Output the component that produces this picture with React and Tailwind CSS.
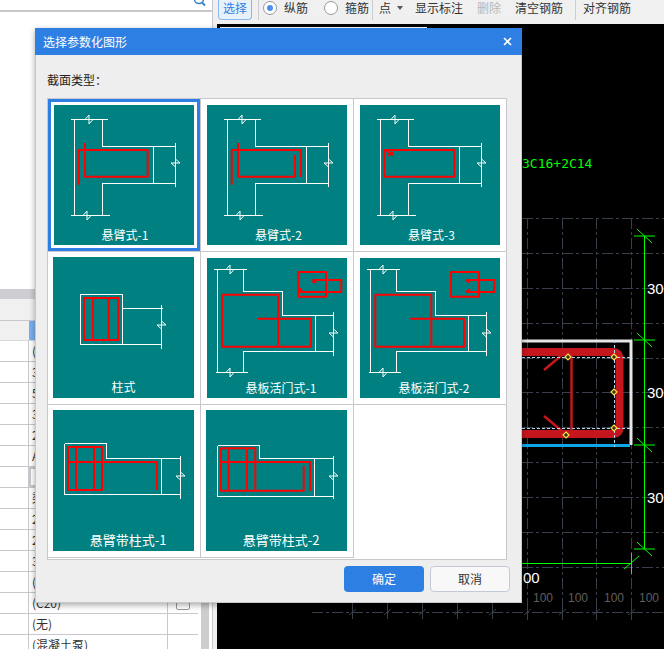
const W = '#ffffff';
const R = '#ff0000';

function Wp({ d }) {
  return <path d={d} fill="none" stroke={W} strokeWidth="1" shapeRendering="crispEdges" />;
}
function Rp({ d }) {
  return <path d={d} fill="none" stroke={R} strokeWidth="2" strokeLinejoin="round" />;
}
function BreakH({ x, y }) {
  return <path d={`M${x},${y - 4.5} V${y + 4.5} M${x - 4},${y} L${x},${y - 4.5} M${x},${y + 4.5} L${x + 4},${y}`} fill="none" stroke={W} strokeWidth="1" />;
}
function BreakV({ x, y }) {
  return <path d={`M${x - 4.5},${y} H${x + 4.5} M${x},${y - 4} L${x + 4.5},${y} M${x - 4.5},${y} L${x},${y + 4}`} fill="none" stroke={W} strokeWidth="1" />;
}

function Cantilever({ children }) {
  return (
    <>
      <Wp d="M16.5,14.5H53.5 M20.5,14.5V110.5 M48.5,14.5V41.5H121.5 M48.5,110.5V78.5H121.5 M99.5,41.5V78.5 M121.5,37.5V81.5 M16.5,110.5H55.5" />
      <BreakH x={35} y={14.5} />
      <BreakH x={33} y={110.5} />
      <BreakV x={121.5} y={58} />
      {children}
    </>
  );
}
function Slab({ children }) {
  return (
    <>
      <Wp d="M6.5,11.5H39.5 M10.5,11.5V114.5 M36.5,11.5V33.5H75.5V57.5H126.5 M36.5,114.5V93.5H126.5 M8.5,114.5H40.5 M108.5,57.5V93.5 M126.5,53.5V97.5" />
      <BreakH x={23} y={11.5} />
      <BreakH x={23} y={114.5} />
      <BreakV x={126.5} y={75} />
      {children}
    </>
  );
}
function ColWhite({ top }) {
  return (
    <>
      <Wp d={`M11.5,${top}H53.5V48.5H127.5 M11.5,${top}V${top + 51}H127.5 M108.5,48.5V${top + 51} M127.5,45.5V88.5`} />
      <BreakV x={127.5} y={66} />
    </>
  );
}

const tiles = [
  { label: '悬臂式-1', cls: 'w-[140px] h-[140px] ml-[3px] mt-[3px]', text: 'text-[12px] pl-[2px]', draw: <Cantilever><Rp d="M31,38V71.7H93.7V45H24.7V79.7" /></Cantilever> },
  { label: '悬臂式-2', cls: 'w-[140px] h-[140px] ml-[6px] mt-[6px]', text: 'text-[12px] pl-[3px]', draw: <Cantilever><Rp d="M31,38V71.7H88V50 M24.7,79.7V45H94V72" /></Cantilever> },
  { label: '悬臂式-3', cls: 'w-[140px] h-[140px] ml-[6px] mt-[6px]', text: 'text-[12px] pl-[3px]', draw: <Cantilever><Rp d="M24.5,45H94.3V71.7H24.5Z M25,45L33,50 M28,51L33,47" /></Cantilever> },
  { label: '柱式', cls: 'w-[141px] h-[141px] ml-[5px] mt-[5px]', text: 'text-[12px] pl-0', draw: (
    <>
      <Wp d="M27.5,37.5H69.5V87.5H27.5Z M69.5,51.5H110 M69.5,87.5H108.5 M108.5,48V92" />
      <BreakV x={108.5} y={68} />
      <Rp d="M31,41H65.3V83H31Z M40,41V83 M55.7,41V83" />
    </>
  ) },
  { label: '悬板活门式-1', cls: 'w-[140px] h-[140px] ml-[6px] mt-[6px]', text: 'text-[12px] pl-[8px]', draw: (
    <Slab><Rp d="M15.3,36.7H71.3V88.7H15.3Z M50.3,60.7H104V88.7H71.3 M91.3,14H119V38.7H91.3Z M106.3,25V22H134.3V34H91.3 M106,22L109,25 M92,30L95,33" /></Slab>
  ) },
  { label: '悬板活门式-2', cls: 'w-[140px] h-[140px] ml-[6px] mt-[6px]', text: 'text-[12px] pl-[8px]', draw: (
    <Slab><Rp d="M15.3,36.7H71.3V88.7H15.3Z M50.3,60.7H104V88.7H71.3 M91,14H119V38.7H91Z M106.7,22H134.3V34H106.7 M106,22L110,25 M106,34L110,31" /></Slab>
  ) },
  { label: '悬臂带柱式-1', cls: 'w-[141px] h-[141px] ml-[5px] mt-[5px]', text: 'text-[13px] pl-[9px]', draw: (
    <>
      <ColWhite top={33.5} />
      <Rp d="M15,37H49V80H15Z M15,52H104V80 M23,37V80 M41,37V80" />
    </>
  ) },
  { label: '悬臂带柱式-2', cls: 'w-[141px] h-[141px] ml-[5px] mt-[5px]', text: 'text-[13px] pl-[9px]', draw: (
    <>
      <ColWhite top={35.5} />
      <Rp d="M15,38.3H49.3V80.7H15Z M15,52H104V80.7 M49.3,80.7H97.7V56 M22.7,38.3V80.7 M41,38.3V80.7" />
    </>
  ) },
];

function Tile({ t }) {
  return (
    <div className={`${t.cls} bg-[#008080] flex flex-col overflow-hidden`}>
      <svg className="block w-full h-[119px] shrink-0">{t.draw}</svg>
      <div className={`flex-1 flex items-center justify-center text-white ${t.text}`}>{t.label}</div>
    </div>
  );
}

const rows = ['(矩形)', '300', '500', '3C16', '2C14', 'A8@100', '', '梁', '2', '2', '3', '(C30)', '(C20)', '(无)', '(混凝土泵)', ''];

function Diamond({ x, y }) {
  return <path d={`M${x},${y - 3} L${x + 3},${y} L${x},${y + 3} L${x - 3},${y} Z`} fill="#3a3010" stroke="#ffe14d" strokeWidth="1.2" />;
}
function GreenTick({ y }) {
  return <path d={`M634,${y}H655 M637,${y - 7}L652,${y + 7}`} stroke="#00ff00" strokeWidth="1" fill="none" />;
}

function Canvas() {
  const hs = [218, 253, 288, 323, 358, 392, 427, 462, 497, 532, 567];
  const vs = [527, 562, 596, 631];
  const ticks = [352, 387, 422, 457, 492, 527, 562, 596, 631];
  return (
    <svg className="block w-[447px] h-[625px] bg-black" viewBox="217 24 447 625">
      <path d="M220,27.5H427" stroke="#ffffff" strokeWidth="1" />
      {hs.map((y) => <path key={y} d={`M522,${y + 0.5}H664`} stroke="#3a3f4c" strokeDasharray="11 3 3 3" shapeRendering="crispEdges" />)}
      {vs.map((x) => <path key={x} d={`M${x + 0.5},218V620`} stroke="#3a3f4c" strokeDasharray="11 3 3 3" shapeRendering="crispEdges" />)}
      <path d="M312,612.5H664" stroke="#3a3f4c" strokeDasharray="11 3 3 3" shapeRendering="crispEdges" />
      {ticks.map((x) => <path key={x} d={`M${x + 0.5},603V619 M${x - 3},615L${x + 4},609`} stroke="#3a3f4c" fill="none" />)}
      <text x="522" y="168" fill="#00ff00" className="font-['DejaVu_Sans_Mono',monospace] text-[13px]">3C16+2C14</text>

      <path d="M522,341H631V445" stroke="#e6e6e6" strokeWidth="3" fill="none" />
      <path d="M522,445.5H630" stroke="#0ea5e9" strokeWidth="3" />
      <path d="M522,352H612Q619.5,352 619.5,360V427Q619.5,434 612,434H522" stroke="#c4161c" strokeWidth="8" fill="none" />
      <path d="M571.5,355V432" stroke="#c4161c" strokeWidth="2.5" />
      <path d="M562,355L544,370 M544,416L562,431" stroke="#c4161c" strokeWidth="2.5" />
      <path d="M522,357.5H630 M522,428.5H630 M614.5,340V447" stroke="#b8d4f0" strokeWidth="1" strokeDasharray="3 2" />
      <Diamond x={568} y={357} />
      <Diamond x={614} y={357} />
      <Diamond x={614} y={392} />
      <Diamond x={614} y={428} />
      <Diamond x={566} y={435} />

      <path d="M644.5,236V549" stroke="#00ff00" strokeWidth="1" />
      <GreenTick y={236} />
      <GreenTick y={340} />
      <GreenTick y={445} />
      <GreenTick y={549} />
      <path d="M522,563.5H631 M631.5,553V574 M624,569L639,556" stroke="#00ff00" strokeWidth="1" fill="none" />

      <text x="647" y="294" fill="#ffffff" className="font-['Liberation_Sans',sans-serif] text-[15px]">300</text>
      <text x="647" y="398" fill="#ffffff" className="font-['Liberation_Sans',sans-serif] text-[15px]">300</text>
      <text x="647" y="503" fill="#ffffff" className="font-['Liberation_Sans',sans-serif] text-[15px]">300</text>
      <text x="523" y="583" fill="#ffffff" className="font-['Liberation_Sans',sans-serif] text-[15px]">00</text>
      {[533, 568, 604, 639].map((x) => (
        <text key={x} x={x} y="602" fill="#5f5f5f" className="font-['Liberation_Sans',sans-serif] text-[12px]">100</text>
      ))}
    </svg>
  );
}

export default function App() {
  return (
    <div className="relative w-[664px] h-[649px] overflow-hidden flex bg-white font-['Noto_Sans_CJK_SC',sans-serif] text-[12px] text-[#333333]">
      {/* left panel */}
      <div className="w-[213px] h-full border-r border-[#c8c8cc] flex flex-col shrink-0 overflow-hidden">
        <div className="h-[10px] shrink-0 relative flex justify-end pr-[4px]">
          <svg className="block w-[14px] h-[10px]" viewBox="0 0 14 10">
            <circle cx="5" cy="-1" r="4.5" fill="none" stroke="#3b82c4" strokeWidth="1.5" />
            <path d="M8,2.5L11,5.5" stroke="#3b82c4" strokeWidth="2" />
          </svg>
        </div>
        <div className="h-[2px] shrink-0 bg-[#c8c8cc]" />
        <div className="h-[277px] shrink-0" />
        <div className="h-[10px] shrink-0 bg-[#cdcdd2]" />
        <div className="h-[22px] shrink-0 bg-[#f0f0f0] border-b border-[#c8c8cc]" />
        <div className="flex">
          <div className="w-[198px] shrink-0">
            <div className="h-[20px] bg-[#f0f0f0] border-b border-[#d8d8d8] flex">
              <div className="w-[29px]" />
              <div className="w-[30px] bg-[#7ab0f0]" />
            </div>
            {rows.map((r, i) => (
              <div key={i} className="h-[21px] border-b border-[#c8c8cc] flex items-center">
                <div className="w-[29px] h-full shrink-0 border-r border-[#c8c8cc]" />
                <div className={`w-[139px] h-full shrink-0 border-r border-[#c8c8cc] pl-[3px] flex items-center ${i === 6 ? 'border-2 border-[#6fa8ea]' : ''}`}>{r}</div>
                <div className="flex-1 flex items-center justify-center">
                  {i === 12 && <div className="w-[14px] h-[14px] border border-[#999999] rounded-[2px] bg-white" />}
                </div>
              </div>
            ))}
          </div>
          <div className="w-[8px] ml-[3px] bg-[#cdcdcd]" />
        </div>
      </div>

      {/* right panel */}
      <div className="flex-1 flex flex-col bg-[#f0f0f0]">
        <div className="h-[24px] shrink-0 flex items-start pl-[5px] leading-[16px]">
          <div className="w-[34px] h-[20px] border-x border-b border-[#8ab8ee] rounded-b-[4px] bg-[#e8f2fd] text-[#2e7fe3] flex items-center justify-center pb-[3px]">选择</div>
          <div className="w-px h-[20px] ml-[6px] bg-[#cccccc]" />
          <div className="w-[14px] h-[14px] ml-[4px] mt-px rounded-full border border-[#999999] bg-white flex items-center justify-center">
            <div className="w-[6px] h-[6px] rounded-full bg-[#4a90ee]" />
          </div>
          <span className="ml-[7px]">纵筋</span>
          <div className="w-[14px] h-[14px] ml-[16px] mt-px rounded-full border border-[#999999] bg-white" />
          <span className="ml-[7px]">箍筋</span>
          <div className="w-px h-[20px] ml-[3px] bg-[#cccccc]" />
          <span className="ml-[6px]">点</span>
          <svg className="block w-[6px] h-[4px] ml-[6px] mt-[6px]" viewBox="0 0 6 4"><path d="M0,0H6L3,4Z" fill="#555555" /></svg>
          <span className="ml-[12px]">显示标注</span>
          <span className="ml-[14px] text-[#b8b8b8]">删除</span>
          <span className="ml-[14px]">清空钢筋</span>
          <div className="w-px h-[20px] ml-[12px] bg-[#cccccc]" />
          <span className="ml-[7px]">对齐钢筋</span>
        </div>
        <div className="ml-[4px] flex-1 overflow-hidden">
          <Canvas />
        </div>
      </div>

      {/* dialog */}
      <div className="absolute left-[35px] top-[28px] w-[487px] h-[575px] bg-[#eeeeee] border-x border-b border-[#c8c8cc] shadow-[0_2px_6px_rgba(0,0,0,0.35)] flex flex-col">
        <div className="h-[27px] shrink-0 -mx-px bg-[#2e7fe3] flex items-center justify-between pl-[8px] pr-[10px] text-white">
          <span>选择参数化图形</span>
          <svg className="block w-[9px] h-[9px]" viewBox="0 0 9 9"><path d="M1,1L8,8 M8,1L1,8" stroke="#ffffff" strokeWidth="1.6" /></svg>
        </div>
        <div className="px-[11px] pt-[16px] flex-1 flex flex-col">
          <div className="h-[18px] leading-[18px] mb-[9px] text-[#222222]">截面类型：</div>
          <div className="w-[460px] h-[462px] bg-white border border-[#c8c8cc] grid grid-cols-[153px_153px_152px] grid-rows-[153px_153px_153px] content-start">
            <div className="border-r border-b border-[#c8c8cc]">
              <div className="w-[152px] h-[152px] border-[3px] border-[#2e7fe3] flex items-start">
                <Tile t={tiles[0]} />
              </div>
            </div>
            {tiles.slice(1).map((t, i) => (
              <div key={t.label} className={`flex items-start border-[#c8c8cc] border-b ${i === 1 || i === 4 ? '' : 'border-r'}`}>
                <Tile t={t} />
              </div>
            ))}
          </div>
          <div className="flex justify-end gap-[6px] mt-[6px]">
            <button className="w-[80px] h-[26px] rounded-[4px] bg-[#2e7fe3] text-white">确定</button>
            <button className="w-[80px] h-[26px] rounded-[4px] bg-[#f8f8f8] border border-[#c3c9d6] text-[#333333]">取消</button>
          </div>
        </div>
      </div>
    </div>
  );
}
